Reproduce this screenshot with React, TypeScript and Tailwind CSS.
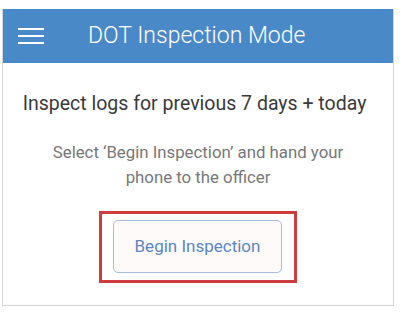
import React from "react";

export default function App() {
  return (
    <div className="w-[406px] h-[322px] bg-white pt-[9px] pl-[2px]" style={{ fontFamily: "Roboto, 'Liberation Sans', sans-serif" }}>
      <div className="w-[392px] border-x border-b border-[#d4d4d4] bg-white">
        <div className="h-[54px] bg-[#4a89c8] flex items-center">
          <div className="ml-[15px] w-[26px] flex flex-col gap-[5px]">
            <div className="h-[2px] bg-white" />
            <div className="h-[2px] bg-white" />
            <div className="h-[2px] bg-white" />
          </div>
          <div className="ml-[44px] text-white text-[23px] font-light leading-[28px]">DOT Inspection Mode</div>
        </div>
        <div className="flex flex-col items-center pb-[22px]">
          <div className="mt-[29px] mr-[7px] text-[19.5px] leading-[24px] text-[#3a3a3a]">Inspect logs for previous 7 days + today</div>
          <div className="mt-[24px] text-[16.8px] leading-[25px] text-[#777777] text-center w-[310px]">
            Select ‘Begin Inspection’ and hand your phone to the officer
          </div>
          <div className="mt-[21px] border-[3px] border-[#cc3d3d] pt-[6px] pb-[7px] pl-[11px] pr-[12px]">
            <button className="w-[169px] h-[53px] rounded-[5px] border border-[#a3bce0] bg-[#fffafa] text-[#5a86c4] text-[17px]">
              Begin Inspection
            </button>
          </div>
        </div>
      </div>
    </div>
  );
}
